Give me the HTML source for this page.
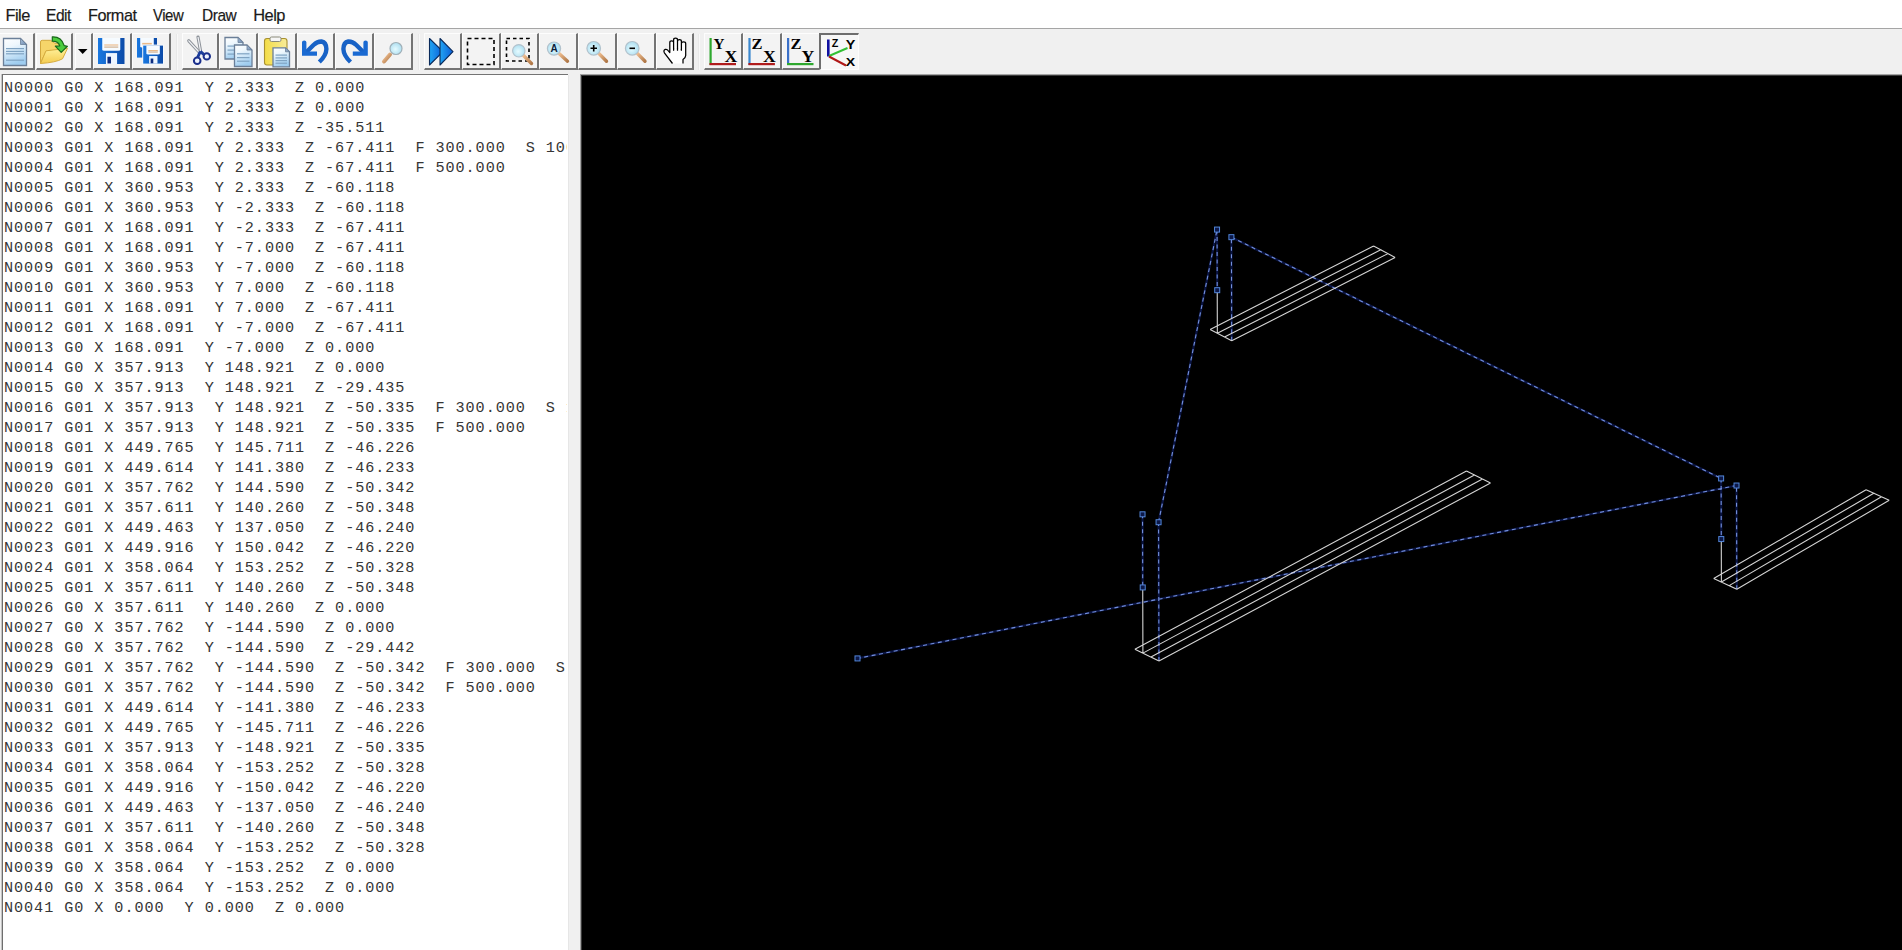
<!DOCTYPE html>
<html><head><meta charset="utf-8"><style>
html,body{margin:0;padding:0;}
body{width:1902px;height:950px;overflow:hidden;position:relative;background:#f0f0f0;font-family:"Liberation Sans",sans-serif;}
#menu{position:absolute;left:0;top:0;width:1902px;height:28px;background:#fff;}
#menu span{position:absolute;top:5px;font-size:16.4px;color:#1a1a1a;line-height:20px;letter-spacing:-0.5px;-webkit-text-stroke:0.2px #1a1a1a;transform-origin:0 0}
#mline{position:absolute;left:0;top:28px;width:1902px;height:1px;background:#a5a5a5;}
#tb{position:absolute;left:0;top:29px;width:1902px;height:45px;background:#f0f0f0;}
.b{position:absolute;top:33px;height:37px;box-sizing:border-box;background:#f3f3f3;border-top:1px solid #fdfdfd;border-left:1px solid #fdfdfd;border-right:2px solid #747474;border-bottom:2px solid #747474;}
.bp{position:absolute;top:33px;height:37px;box-sizing:border-box;background:#f7f7f7;border-top:2px solid #6e6e6e;border-left:2px solid #6e6e6e;border-right:1px solid #fdfdfd;border-bottom:1px solid #fdfdfd;}
.sep{position:absolute;top:34px;height:36px;width:2px;border-left:1px solid #e8e8e8;border-right:1px solid #f8f8f8;box-sizing:border-box}
#txt{position:absolute;left:2px;top:74px;width:566px;height:876px;background:#fff;border-top:1px solid #747474;border-left:1px solid #6e6e6e;box-shadow:-1px 0 0 #c4c4c4;box-sizing:border-box;overflow:hidden;}
#txt pre{margin:0;position:absolute;left:1px;top:3px;font-family:"Liberation Mono",monospace;font-size:15.2px;letter-spacing:0.92px;line-height:20px;color:#363636;white-space:pre;}
#txtr{position:absolute;left:567px;top:75px;width:1px;height:875px;background:#fff}#txtr2{position:absolute;left:568px;top:75px;width:1px;height:875px;background:#e6e6e6}
#cv{position:absolute;left:580px;top:74px;width:1322px;height:876px;background:#000;box-sizing:border-box;border-top:1px solid #a4a4a4;border-left:1px solid #a4a4a4;box-shadow:inset 1px 1px 0 #3a3a3a;}
#draw{position:absolute;left:0;top:0;}
</style></head><body>
<div id="menu"><span style="left:5.4px;transform:scaleX(1.0)">File</span><span style="left:45.6px;transform:scaleX(0.95)">Edit</span><span style="left:88.2px;transform:scaleX(0.99)">Format</span><span style="left:152.8px;transform:scaleX(0.91)">View</span><span style="left:201.8px;transform:scaleX(0.945)">Draw</span><span style="left:253.2px;transform:scaleX(1.0)">Help</span></div>
<div id="mline"></div>
<div id="tb"></div>
<div class="b" style="left:-4px;width:39px"></div>
<div class="b" style="left:36px;width:37px"></div>
<div class="b" style="left:75px;width:18px"></div>
<div class="b" style="left:93px;width:39px"></div>
<div class="b" style="left:132px;width:39px"></div>
<div class="b" style="left:182px;width:37px"></div>
<div class="b" style="left:219px;width:39px"></div>
<div class="b" style="left:258px;width:39px"></div>
<div class="b" style="left:297px;width:38px"></div>
<div class="b" style="left:335px;width:39px"></div>
<div class="b" style="left:374px;width:39px"></div>
<div class="b" style="left:424px;width:38px"></div>
<div class="b" style="left:462px;width:39px"></div>
<div class="b" style="left:501px;width:38px"></div>
<div class="b" style="left:539px;width:39px"></div>
<div class="b" style="left:578px;width:39px"></div>
<div class="b" style="left:617px;width:39px"></div>
<div class="b" style="left:656px;width:38px"></div>
<div class="b" style="left:704px;width:39px"></div>
<div class="b" style="left:743px;width:39px"></div>
<div class="b" style="left:782px;width:39px"></div>
<div class="bp" style="left:819px;width:40px"></div>
<div class="sep" style="left:176px"></div><div class="sep" style="left:418px"></div><div class="sep" style="left:698px"></div>
<svg id="icons" width="1902" height="75" viewBox="0 0 1902 75" style="position:absolute;left:0;top:0"><defs>
<linearGradient id="gPage" x1="0" y1="0" x2="0.3" y2="1"><stop offset="0" stop-color="#ffffff"/><stop offset="0.35" stop-color="#eef7fd"/><stop offset="1" stop-color="#9fcdf0"/></linearGradient>
<linearGradient id="gFold" x1="0" y1="0" x2="1" y2="1"><stop offset="0" stop-color="#a9bfd8"/><stop offset="1" stop-color="#6f8db3"/></linearGradient>
<linearGradient id="gFolder" x1="0" y1="0" x2="0" y2="1"><stop offset="0" stop-color="#fff09a"/><stop offset="1" stop-color="#f4cc50"/></linearGradient>
<linearGradient id="gFloppy" x1="0" y1="0" x2="1" y2="0"><stop offset="0" stop-color="#1a78e0"/><stop offset="1" stop-color="#0b4aa8"/></linearGradient>
<linearGradient id="gPlay" x1="0" y1="0" x2="1" y2="0"><stop offset="0" stop-color="#22a4f2"/><stop offset="1" stop-color="#0b5ed8"/></linearGradient>
<linearGradient id="gClip" x1="0" y1="0" x2="1" y2="0"><stop offset="0" stop-color="#f3dc46"/><stop offset="1" stop-color="#f8ec9a"/></linearGradient>
<radialGradient id="gLens" cx="0.45" cy="0.55" r="0.6"><stop offset="0" stop-color="#e6fbff"/><stop offset="1" stop-color="#a8dcef"/></radialGradient>
<linearGradient id="gHandle" x1="0" y1="0" x2="1" y2="1"><stop offset="0" stop-color="#f8c89a"/><stop offset="1" stop-color="#b07848"/></linearGradient>
</defs><path d="M3.5 38.5H20.5L26.5 44.5V65.5H3.5Z" fill="url(#gPage)" stroke="#6b7f98" stroke-width="1.3"/><path d="M20.5 38.5V44.5H26.5Z" fill="url(#gFold)" stroke="#6b7f98" stroke-width="0.8"/><rect x="6" y="48" width="18" height="1.2" fill="#7fa3c2"/><rect x="6" y="50.8" width="18" height="1.2" fill="#7fa3c2"/><rect x="6" y="53.2" width="18" height="1.2" fill="#7fa3c2"/><rect x="6" y="59.6" width="18" height="1.2" fill="#7fa3c2"/><path d="M40.5 63.5V42Q40.5 40.3 42.2 40.3H50.5L55 43.3H60V50L46 51Z" fill="#f6d56a" stroke="#d2a83e" stroke-width="1"/><path d="M40.5 63.5L46 50.8L67.5 48.3L62.5 58.8Q56 62.5 40.5 63.5Z" fill="url(#gFolder)" stroke="#d6ac3e" stroke-width="1"/><path d="M52.3 36.8Q61.5 36.4 64.2 45.6L67.4 46.3L61.2 52.4L55.3 46.1L59.8 45.9Q58.2 41.2 52.3 41.2Z" fill="#4ccd3e" stroke="#1b681b" stroke-width="1.2" stroke-linejoin="round"/><path d="M78 49H87.5L82.7 54Z" fill="#000"/><path d="M98 38H124.5V64H98Z" fill="url(#gFloppy)"/><path d="M102.24 38H120.25999999999999V49.7Q120.25999999999999 50.74 118.25999999999999 50.74H104.24Q102.24 50.74 102.24 49.7Z" fill="#f6fbff"/><rect x="104.24" y="44.5" width="14.019999999999996" height="1" fill="#e9b27a"/><rect x="104.24" y="46.58" width="14.019999999999996" height="1" fill="#c9a27a"/><rect x="105.95" y="53.08" width="11.129999999999995" height="10.92" fill="#eef6ff"/><rect x="107.45" y="56.72" width="3.5615999999999985" height="6.76" fill="#0c2c80"/><path d="M137 38H157V57.6H137Z" fill="url(#gFloppy)"/><path d="M140.2 38H153.8V46.82Q153.8 47.604 151.8 47.604H142.2Q140.2 47.604 140.2 46.82Z" fill="#f6fbff"/><rect x="142.2" y="42.9" width="9.600000000000023" height="1" fill="#e9b27a"/><rect x="142.2" y="44.468" width="9.600000000000023" height="1" fill="#c9a27a"/><rect x="143.0" y="49.368" width="8.400000000000006" height="8.232000000000001" fill="#eef6ff"/><rect x="144.5" y="52.112" width="2.688000000000002" height="5.096000000000001" fill="#0c2c80"/><rect x="142.2" y="44.6" width="21.8" height="20" fill="#f4f8fc"/><path d="M143.2 45.6H163.0V63.6H143.2Z" fill="url(#gFloppy)"/><path d="M146.368 45.6H159.832V53.7Q159.832 54.42 157.832 54.42H148.368Q146.368 54.42 146.368 53.7Z" fill="#f6fbff"/><rect x="148.368" y="50.1" width="9.463999999999999" height="1" fill="#e9b27a"/><rect x="148.368" y="51.54" width="9.463999999999999" height="1" fill="#c9a27a"/><rect x="149.14" y="56.04" width="8.316000000000003" height="7.56" fill="#eef6ff"/><rect x="150.64" y="58.56" width="2.661120000000001" height="4.68" fill="#0c2c80"/><path d="M188.8 40.8L199.5 52.5" stroke="#8d9299" stroke-width="3.2" stroke-linecap="round"/><path d="M188.8 40.8L199.5 52.5" stroke="#f2f4f8" stroke-width="1.2" stroke-linecap="round"/><path d="M198 37L200.8 52.5" stroke="#8d9299" stroke-width="3.2" stroke-linecap="round"/><path d="M198 37L200.8 52.5" stroke="#f2f4f8" stroke-width="1.2"/><path d="M200.3 51.5L197.6 57.5M200.3 51.5L203.8 54.3" stroke="#1b3d9c" stroke-width="3"/><circle cx="197.2" cy="60.8" r="3.3" fill="#eef4ff" stroke="#1a2f8c" stroke-width="2"/><circle cx="206.8" cy="56.4" r="3.2" fill="#eef4ff" stroke="#1a2f8c" stroke-width="2"/><path d="M225.0 37.5H238.0L243.0 42.5V59.0H225.0Z" fill="url(#gPage)" stroke="#6b7f98" stroke-width="1.3"/><path d="M238.0 37.5V42.5H243.0Z" fill="url(#gFold)" stroke="#6b7f98" stroke-width="0.8"/><rect x="227.5" y="45.5" width="13" height="1.2" fill="#7fa3c2"/><rect x="227.5" y="49.5" width="13" height="1.2" fill="#7fa3c2"/><rect x="227.5" y="53.5" width="13" height="1.2" fill="#7fa3c2"/><path d="M234.5 45.0H247.0L252.0 50.0V66.5H234.5Z" fill="url(#gPage)" stroke="#6b7f98" stroke-width="1.3"/><path d="M247.0 45.0V50.0H252.0Z" fill="url(#gFold)" stroke="#6b7f98" stroke-width="0.8"/><rect x="237" y="53.2" width="12.5" height="1.2" fill="#7fa3c2"/><rect x="237" y="57" width="12.5" height="1.2" fill="#7fa3c2"/><rect x="237" y="60.6" width="12.5" height="1.2" fill="#7fa3c2"/><rect x="264.5" y="38.5" width="22.5" height="26.5" rx="2.5" fill="url(#gClip)" stroke="#a89030" stroke-width="1.1"/><rect x="270" y="37" width="11" height="4.5" rx="1.5" fill="#f6f6f6" stroke="#8a8a7a" stroke-width="1"/><path d="M273.0 47.8H285.5L289.5 51.8V66.8H273.0Z" fill="url(#gPage)" stroke="#6b7f98" stroke-width="1.3"/><path d="M285.5 47.8V51.8H289.5Z" fill="url(#gFold)" stroke="#6b7f98" stroke-width="0.8"/><rect x="275.5" y="54.5" width="11.5" height="1.2" fill="#7fa3c2"/><rect x="275.5" y="57.3" width="11.5" height="1.2" fill="#7fa3c2"/><rect x="275.5" y="60" width="11.5" height="1.2" fill="#7fa3c2"/><rect x="275.5" y="62.6" width="11.5" height="1.2" fill="#7fa3c2"/><path d="M305.5 53L313.5 45Q317.5 41.3 321.5 41.5Q326.3 42.5 326.4 49Q326.2 55.5 319.3 62" fill="none" stroke="#1862c6" stroke-width="4.4" stroke-linecap="butt" stroke-linejoin="round"/><path d="M302 42.2Q302 40.6 304.2 40.6Q306.4 40.6 306.4 42.2V51.6H317V55.8H302Z" fill="#1a6ad2"/><g transform="translate(669.8 0) scale(-1 1)"><path d="M305.5 53L313.5 45Q317.5 41.3 321.5 41.5Q326.3 42.5 326.4 49Q326.2 55.5 319.3 62" fill="none" stroke="#1862c6" stroke-width="4.4" stroke-linecap="butt" stroke-linejoin="round"/><path d="M302 42.2Q302 40.6 304.2 40.6Q306.4 40.6 306.4 42.2V51.6H317V55.8H302Z" fill="#1a6ad2"/></g><line x1="390" y1="54.5" x2="384" y2="61.5" stroke="url(#gHandle)" stroke-width="4" stroke-linecap="round"/><circle cx="396" cy="48.5" r="6" fill="url(#gLens)" stroke="#a0b0b8" stroke-width="1.2"/><path d="M429.5 38.5L443 51.7L429.5 65Z" fill="url(#gPlay)" stroke="#0a2a5a" stroke-width="1.1" stroke-linejoin="round"/><path d="M440 38.5L453 51.7L440 65Z" fill="url(#gPlay)" stroke="#0a2a5a" stroke-width="1.1" stroke-linejoin="round"/><rect x="467.5" y="38.5" width="26.5" height="26" fill="none" stroke="#000" stroke-width="1.6" stroke-dasharray="4 3"/><rect x="506.5" y="38.5" width="22.5" height="22.5" fill="none" stroke="#000" stroke-width="1.6" stroke-dasharray="3.5 3"/><line x1="522.52" y1="54.519999999999996" x2="531.5" y2="63.5" stroke="url(#gHandle)" stroke-width="3.4" stroke-linecap="round"/><circle cx="518.8" cy="50.8" r="6.2" fill="url(#gLens)" stroke="#b2c2cc" stroke-width="1.2"/><line x1="557.96" y1="52.56" x2="567.5" y2="61.2" stroke="url(#gHandle)" stroke-width="3.4" stroke-linecap="round"/><circle cx="554" cy="48.6" r="6.6" fill="url(#gLens)" stroke="#b2c2cc" stroke-width="1.2"/><text x="554.1" y="51.9" font-family="Liberation Sans" font-weight="bold" font-size="10" text-anchor="middle" fill="#0a1e3c">A</text><line x1="597.7800000000001" y1="52.379999999999995" x2="606.5" y2="61.3" stroke="url(#gHandle)" stroke-width="3.4" stroke-linecap="round"/><circle cx="593.7" cy="48.3" r="6.8" fill="url(#gLens)" stroke="#b2c2cc" stroke-width="1.2"/><path d="M590.5 48.3H597M593.7 45V51.6" stroke="#000" stroke-width="1.6"/><line x1="636.2800000000001" y1="52.379999999999995" x2="645" y2="61.3" stroke="url(#gHandle)" stroke-width="3.4" stroke-linecap="round"/><circle cx="632.2" cy="48.3" r="6.8" fill="url(#gLens)" stroke="#b2c2cc" stroke-width="1.2"/><path d="M629.5 48.3H635" stroke="#000" stroke-width="1.6"/><path d="M672.5 63.5L664.4 52.8Q663.1 50.3 665.3 49.4Q667 48.9 668.4 50.8L669.8 52.6V42.6Q669.8 40.8 671.7 40.8Q673.6 40.8 673.6 42.6V49V40Q673.6 38.2 675.55 38.2Q677.5 38.2 677.5 40V49V41.4Q677.5 39.6 679.45 39.6Q681.4 39.6 681.4 41.4V49.5V43.6Q681.4 41.8 683.55 41.8Q685.7 41.8 685.7 43.6V55.5Q685.7 57.5 683 59.5V63.5" fill="#fff" stroke="#000" stroke-width="1.25" stroke-linejoin="round"/><path d="M673.6 48.5V50.8M677.5 48.5V50.8M681.4 49V50.8" stroke="#000" stroke-width="1.2"/><rect x="709.5" y="38" width="2.2" height="27" fill="#2ea82e"/><rect x="709.5" y="63" width="26.5" height="2.2" fill="#b01c1c"/><text x="713.4" y="48.8" font-family="Liberation Serif" font-weight="bold" font-size="15.6" textLength="11" lengthAdjust="spacingAndGlyphs" fill="#000">Y</text><text x="724.6" y="61.6" font-family="Liberation Serif" font-weight="bold" font-size="16.4" textLength="12.8" lengthAdjust="spacingAndGlyphs" fill="#000">X</text><rect x="748.4" y="38" width="2.2" height="27" fill="#3a88d0"/><rect x="748.4" y="63" width="26.5" height="2.2" fill="#b01c1c"/><text x="751.6" y="48.8" font-family="Liberation Serif" font-weight="bold" font-size="15.6" textLength="11" lengthAdjust="spacingAndGlyphs" fill="#000">Z</text><text x="763" y="61.6" font-family="Liberation Serif" font-weight="bold" font-size="16.4" textLength="12.8" lengthAdjust="spacingAndGlyphs" fill="#000">X</text><rect x="787" y="38" width="2.2" height="27" fill="#3a70c8"/><rect x="787" y="63" width="26.5" height="2.2" fill="#2ea82e"/><text x="790.4" y="48.8" font-family="Liberation Serif" font-weight="bold" font-size="15.6" textLength="11" lengthAdjust="spacingAndGlyphs" fill="#000">Z</text><text x="801.6" y="61.6" font-family="Liberation Serif" font-weight="bold" font-size="16.4" textLength="12.8" lengthAdjust="spacingAndGlyphs" fill="#000">Y</text><rect x="827" y="39.5" width="2.6" height="17" fill="#1010a0"/><path d="M829 56L847.5 48" stroke="#34c034" stroke-width="2"/><path d="M829 56.5L846 65.5" stroke="#b01818" stroke-width="2"/><text x="831.8" y="47.3" font-family="Liberation Sans" font-weight="bold" font-size="10.5" textLength="6.6" lengthAdjust="spacingAndGlyphs" fill="#000">Z</text><text x="845.8" y="49" font-family="Liberation Sans" font-weight="bold" font-size="12.5" textLength="9.6" lengthAdjust="spacingAndGlyphs" fill="#000">Y</text><text x="845.8" y="66.2" font-family="Liberation Sans" font-weight="bold" font-size="11.5" textLength="9.4" lengthAdjust="spacingAndGlyphs" fill="#000">X</text></svg>
<div id="txt"><pre>N0000 G0 X 168.091  Y 2.333  Z 0.000
N0001 G0 X 168.091  Y 2.333  Z 0.000
N0002 G0 X 168.091  Y 2.333  Z -35.511
N0003 G01 X 168.091  Y 2.333  Z -67.411  F 300.000  S 1000
N0004 G01 X 168.091  Y 2.333  Z -67.411  F 500.000
N0005 G01 X 360.953  Y 2.333  Z -60.118
N0006 G01 X 360.953  Y -2.333  Z -60.118
N0007 G01 X 168.091  Y -2.333  Z -67.411
N0008 G01 X 168.091  Y -7.000  Z -67.411
N0009 G01 X 360.953  Y -7.000  Z -60.118
N0010 G01 X 360.953  Y 7.000  Z -60.118
N0011 G01 X 168.091  Y 7.000  Z -67.411
N0012 G01 X 168.091  Y -7.000  Z -67.411
N0013 G0 X 168.091  Y -7.000  Z 0.000
N0014 G0 X 357.913  Y 148.921  Z 0.000
N0015 G0 X 357.913  Y 148.921  Z -29.435
N0016 G01 X 357.913  Y 148.921  Z -50.335  F 300.000  S 1000
N0017 G01 X 357.913  Y 148.921  Z -50.335  F 500.000
N0018 G01 X 449.765  Y 145.711  Z -46.226
N0019 G01 X 449.614  Y 141.380  Z -46.233
N0020 G01 X 357.762  Y 144.590  Z -50.342
N0021 G01 X 357.611  Y 140.260  Z -50.348
N0022 G01 X 449.463  Y 137.050  Z -46.240
N0023 G01 X 449.916  Y 150.042  Z -46.220
N0024 G01 X 358.064  Y 153.252  Z -50.328
N0025 G01 X 357.611  Y 140.260  Z -50.348
N0026 G0 X 357.611  Y 140.260  Z 0.000
N0027 G0 X 357.762  Y -144.590  Z 0.000
N0028 G0 X 357.762  Y -144.590  Z -29.442
N0029 G01 X 357.762  Y -144.590  Z -50.342  F 300.000  S 1000
N0030 G01 X 357.762  Y -144.590  Z -50.342  F 500.000
N0031 G01 X 449.614  Y -141.380  Z -46.233
N0032 G01 X 449.765  Y -145.711  Z -46.226
N0033 G01 X 357.913  Y -148.921  Z -50.335
N0034 G01 X 358.064  Y -153.252  Z -50.328
N0035 G01 X 449.916  Y -150.042  Z -46.220
N0036 G01 X 449.463  Y -137.050  Z -46.240
N0037 G01 X 357.611  Y -140.260  Z -50.348
N0038 G01 X 358.064  Y -153.252  Z -50.328
N0039 G0 X 358.064  Y -153.252  Z 0.000
N0040 G0 X 358.064  Y -153.252  Z 0.000
N0041 G0 X 0.000  Y 0.000  Z 0.000</pre></div>
<div id="txtr"></div><div id="txtr2"></div>
<div id="cv"></div>
<svg id="draw" width="1902" height="950" viewBox="0 0 1902 950"><path d="M1142.53 514.31L1142.73 587.43M1158.95 661.02L1158.57 522.22M1158.57 522.22L1217.05 229.58M1217.05 229.58L1217.22 290.18M1231.7 340.84L1231.41 237.17M1231.41 237.17L1721.12 478.44M1721.12 478.44L1721.28 539.06M1736.8 589.15L1736.52 485.52M1736.52 485.52L857.51 658.42" stroke="#0a1442" stroke-width="2.2" fill="none"/><path d="M1142.53 514.31L1142.73 587.43M1158.95 661.02L1158.57 522.22M1158.57 522.22L1217.05 229.58M1217.05 229.58L1217.22 290.18M1231.7 340.84L1231.41 237.17M1231.41 237.17L1721.12 478.44M1721.12 478.44L1721.28 539.06M1736.8 589.15L1736.52 485.52M1736.52 485.52L857.51 658.42" stroke="#7490dc" stroke-width="1.1" stroke-dasharray="4 3.5" fill="none"/><path d="M1142.73 587.43L1142.91 653.11M1142.91 653.11L1474.49 475.01M1474.49 475.01L1482.51 478.97M1482.51 478.97L1150.93 657.06M1150.93 657.06L1158.95 661.02M1158.95 661.02L1490.53 482.92M1490.53 482.92L1466.47 471.06M1466.47 471.06L1134.89 649.15M1134.89 649.15L1158.95 661.02M1217.22 290.18L1217.33 333.22M1217.33 333.22L1380.76 249.81M1380.76 249.81L1387.94 253.62M1387.94 253.62L1224.52 337.03M1224.52 337.03L1231.7 340.84M1231.7 340.84L1395.12 257.43M1395.12 257.43L1373.58 246.0M1373.58 246.0L1210.15 329.4M1210.15 329.4L1231.7 340.84M1721.28 539.06L1721.4 582.09M1721.4 582.09L1873.8 493.24M1873.8 493.24L1881.5 496.77M1881.5 496.77L1729.1 585.62M1729.1 585.62L1736.8 589.15M1736.8 589.15L1889.2 500.3M1889.2 500.3L1866.1 489.72M1866.1 489.72L1713.7 578.56M1713.7 578.56L1736.8 589.15" stroke="#d4d4d4" stroke-width="1.1" fill="none"/><rect x="855.01" y="655.92" width="5" height="5" fill="#0c1848" stroke="#5286d8" stroke-width="1"/><rect x="1140.03" y="511.80999999999995" width="5" height="5" fill="#0c1848" stroke="#5286d8" stroke-width="1"/><rect x="1140.23" y="584.93" width="5" height="5" fill="#0c1848" stroke="#5286d8" stroke-width="1"/><rect x="1156.07" y="519.72" width="5" height="5" fill="#0c1848" stroke="#5286d8" stroke-width="1"/><rect x="1214.55" y="227.08" width="5" height="5" fill="#0c1848" stroke="#5286d8" stroke-width="1"/><rect x="1214.72" y="287.68" width="5" height="5" fill="#0c1848" stroke="#5286d8" stroke-width="1"/><rect x="1228.91" y="234.67" width="5" height="5" fill="#0c1848" stroke="#5286d8" stroke-width="1"/><rect x="1718.62" y="475.94" width="5" height="5" fill="#0c1848" stroke="#5286d8" stroke-width="1"/><rect x="1718.78" y="536.56" width="5" height="5" fill="#0c1848" stroke="#5286d8" stroke-width="1"/><rect x="1734.02" y="483.02" width="5" height="5" fill="#0c1848" stroke="#5286d8" stroke-width="1"/></svg>
</body></html>
